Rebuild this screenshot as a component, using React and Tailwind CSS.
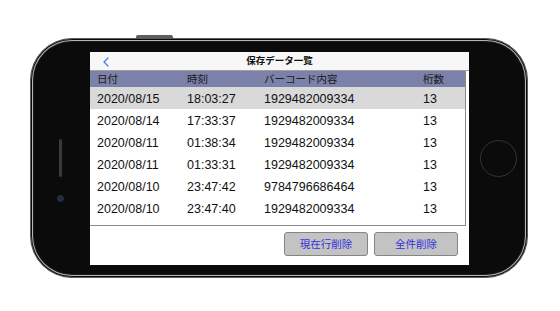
const rows = [
  { date: '2020/08/15', time: '18:03:27', code: '1929482009334', len: 13 },
  { date: '2020/08/14', time: '17:33:37', code: '1929482009334', len: 13 },
  { date: '2020/08/11', time: '01:38:34', code: '1929482009334', len: 13 },
  { date: '2020/08/11', time: '01:33:31', code: '1929482009334', len: 13 },
  { date: '2020/08/10', time: '23:47:42', code: '9784796686464', len: 13 },
  { date: '2020/08/10', time: '23:47:40', code: '1929482009334', len: 13 },
];

const font = "font-['Liberation_Sans','Noto_Sans_CJK_JP',sans-serif]";

const App = () => {
  return (
    <div className={`w-[560px] h-[311px] bg-white pl-[30px] pt-[38px] ${font}`}>
      {/* Phone body */}
      <div className="relative w-[498px] h-[240px] rounded-[42px] bg-[#0b0b0b] border border-[#5a5a5a] shadow-[inset_0_0_0_1px_#0b0b0b,inset_0_0_0_2px_#b5b5b5,inset_0_0_0_3px_#1a1a1a] flex">
        <div className="absolute left-[105px] -top-[4px] w-[37px] h-[3px] rounded-t-[2px] bg-[#5e5e5e]" />

        {/* left bezel */}
        <div className="w-[59px] flex flex-col items-center pt-[100px]">
          <div className="w-[3px] h-[38px] rounded-full bg-[#3a3a3a]" />
          <div className="mt-[18px] w-[7px] h-[7px] rounded-full bg-[#1d2a55] border border-[#333]" />
        </div>

        {/* screen */}
        <div className="mt-[13px] w-[379px] h-[213px] bg-white flex flex-col">
          <div className="h-[19px] bg-[#f7f7f7] border-b border-[#a0a0a0] relative flex items-center justify-center pt-[1px]">
            <svg className="absolute left-[13px] top-[5px]" width="6" height="10" viewBox="0 0 6 10">
              <path d="M5 1 L1 5 L5 9" fill="none" stroke="#3b82f6" strokeWidth="1.3" strokeLinecap="round" strokeLinejoin="round" />
            </svg>
            <span className="text-[9.5px] font-bold text-[#111]">保存データ一覧</span>
          </div>

          <div className="w-[376px] h-[155px] border-r border-b border-[#8a8a8a]">
            <div className="h-[16px] bg-[#7b81a8] flex items-center pt-[2px] text-[10.5px] text-[#1a1a1a]">
              <span className="w-[97px] pl-[7px]">日付</span>
              <span className="w-[77px]">時刻</span>
              <span className="w-[159px]">バーコード内容</span>
              <span>桁数</span>
            </div>
            {rows.map((r, i) => (
              <div
                key={i}
                className={`h-[22px] flex items-center pt-[3px] text-[12.5px] text-[#111] ${i === 0 ? 'bg-[#d9d9d9]' : 'bg-white'}`}
              >
                <span className="w-[97px] pl-[7px]">{r.date}</span>
                <span className="w-[77px]">{r.time}</span>
                <span className="w-[159px]">{r.code}</span>
                <span>{r.len}</span>
              </div>
            ))}
          </div>

          <div className="flex justify-end gap-[6px] pr-[11px] pt-[6px]">
            <button className="w-[84px] h-[24px] bg-[#c3c3c3] border border-[#858585] rounded-[3px] pt-[1px] text-[10.5px] text-[#3030e0]">
              現在行削除
            </button>
            <button className="w-[84px] h-[24px] bg-[#c3c3c3] border border-[#858585] rounded-[3px] pt-[1px] text-[10.5px] text-[#3030e0]">
              全件削除
            </button>
          </div>
        </div>

        {/* right bezel with home button */}
        <div className="flex-1 flex items-center justify-center">
          <div className="w-[37px] h-[37px] rounded-full border-[1.5px] border-[#353535]" />
        </div>
      </div>
    </div>
  );
};

export default App;
